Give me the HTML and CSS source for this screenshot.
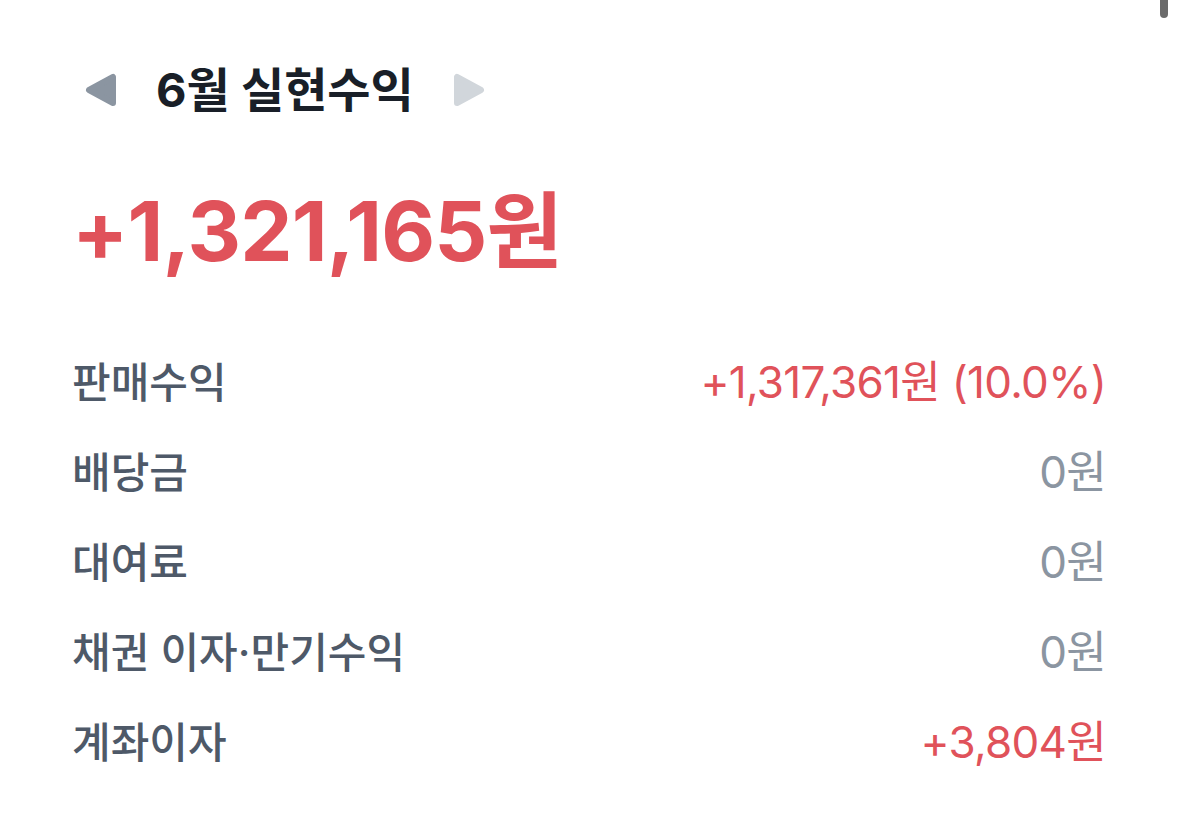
FILE: index.html
```html
<!DOCTYPE html>
<html lang="ko">
<head>
    <meta charset="UTF-8">
    <meta name="viewport" content="width=device-width, initial-scale=1.0">
    <title>실현수익</title>
    <link rel="stylesheet" href="styles.css">
</head>
<body>
    <div class="scroll-thumb"></div>

    <div class="container">
        <div class="month-nav">
            <button class="nav-btn prev" aria-label="이전 달">
                <svg width="34" height="34" viewBox="0 0 34 34">
                    <polygon points="29,4 29,30 5,17" />
                </svg>
            </button>
            <h1 class="month-title">6월 실현수익</h1>
            <button class="nav-btn next" aria-label="다음 달">
                <svg width="34" height="34" viewBox="0 0 34 34">
                    <polygon points="5,4 5,30 29,17" />
                </svg>
            </button>
        </div>

        <div class="total plus">+1,321,165원</div>

        <ul class="breakdown">
            <li class="row">
                <span class="label">판매수익</span>
                <span class="value plus">+1,317,361원 (10.0%)</span>
            </li>
            <li class="row">
                <span class="label">배당금</span>
                <span class="value zero">0원</span>
            </li>
            <li class="row">
                <span class="label">대여료</span>
                <span class="value zero">0원</span>
            </li>
            <li class="row">
                <span class="label">채권 이자·만기수익</span>
                <span class="value zero">0원</span>
            </li>
            <li class="row">
                <span class="label">계좌이자</span>
                <span class="value plus">+3,804원</span>
            </li>
        </ul>
    </div>
</body>
</html>
```

FILE: styles.css
```css
body {
    margin: 0;
    background-color: #ffffff;
    font-family: Inter, "Noto Sans CJK KR", sans-serif;
    color: #191f28;
}

/* overlay scrollbar thumb */
.scroll-thumb {
    position: fixed;
    top: 0;
    right: 11px;
    width: 8px;
    height: 18px;
    border-radius: 0 0 4px 4px;
    background-color: #6b6b6b;
}

.container {
    padding: 60px 73px 0 72px;
}

.month-nav {
    display: flex;
    align-items: center;
    height: 60px;
    padding-left: 12px;
}

.nav-btn {
    border: none;
    background: none;
    padding: 0;
    width: 34px;
    height: 34px;
    cursor: pointer;
}

.nav-btn svg {
    display: block;
}

.nav-btn.prev polygon {
    fill: #8b95a1;
    stroke: #8b95a1;
    stroke-width: 6;
    stroke-linejoin: round;
}

.nav-btn.next polygon {
    fill: #d1d6db;
    stroke: #d1d6db;
    stroke-width: 6;
    stroke-linejoin: round;
}

.month-title {
    margin: 0 38px 0 38px;
    font-size: 47px;
    font-weight: 700;
    line-height: 60px;
    color: #191f28;
}

.total {
    margin-top: 61px;
    font-size: 83px;
    font-weight: 700;
    line-height: 100px;
    letter-spacing: -0.8px;
}

.plus {
    color: #e0525a;
}

.breakdown {
    list-style: none;
    margin: 53px 0 0;
    padding: 0;
}

.row {
    display: flex;
    justify-content: space-between;
    align-items: center;
    height: 90px;
}

.label {
    font-size: 42px;
    font-weight: 500;
    color: #4e5968;
}

.value {
    font-size: 44px;
    font-weight: 400;
    letter-spacing: -0.7px;
}

.value.zero {
    color: #8b95a1;
}

.value.plus {
    color: #e0525a;
}
```
